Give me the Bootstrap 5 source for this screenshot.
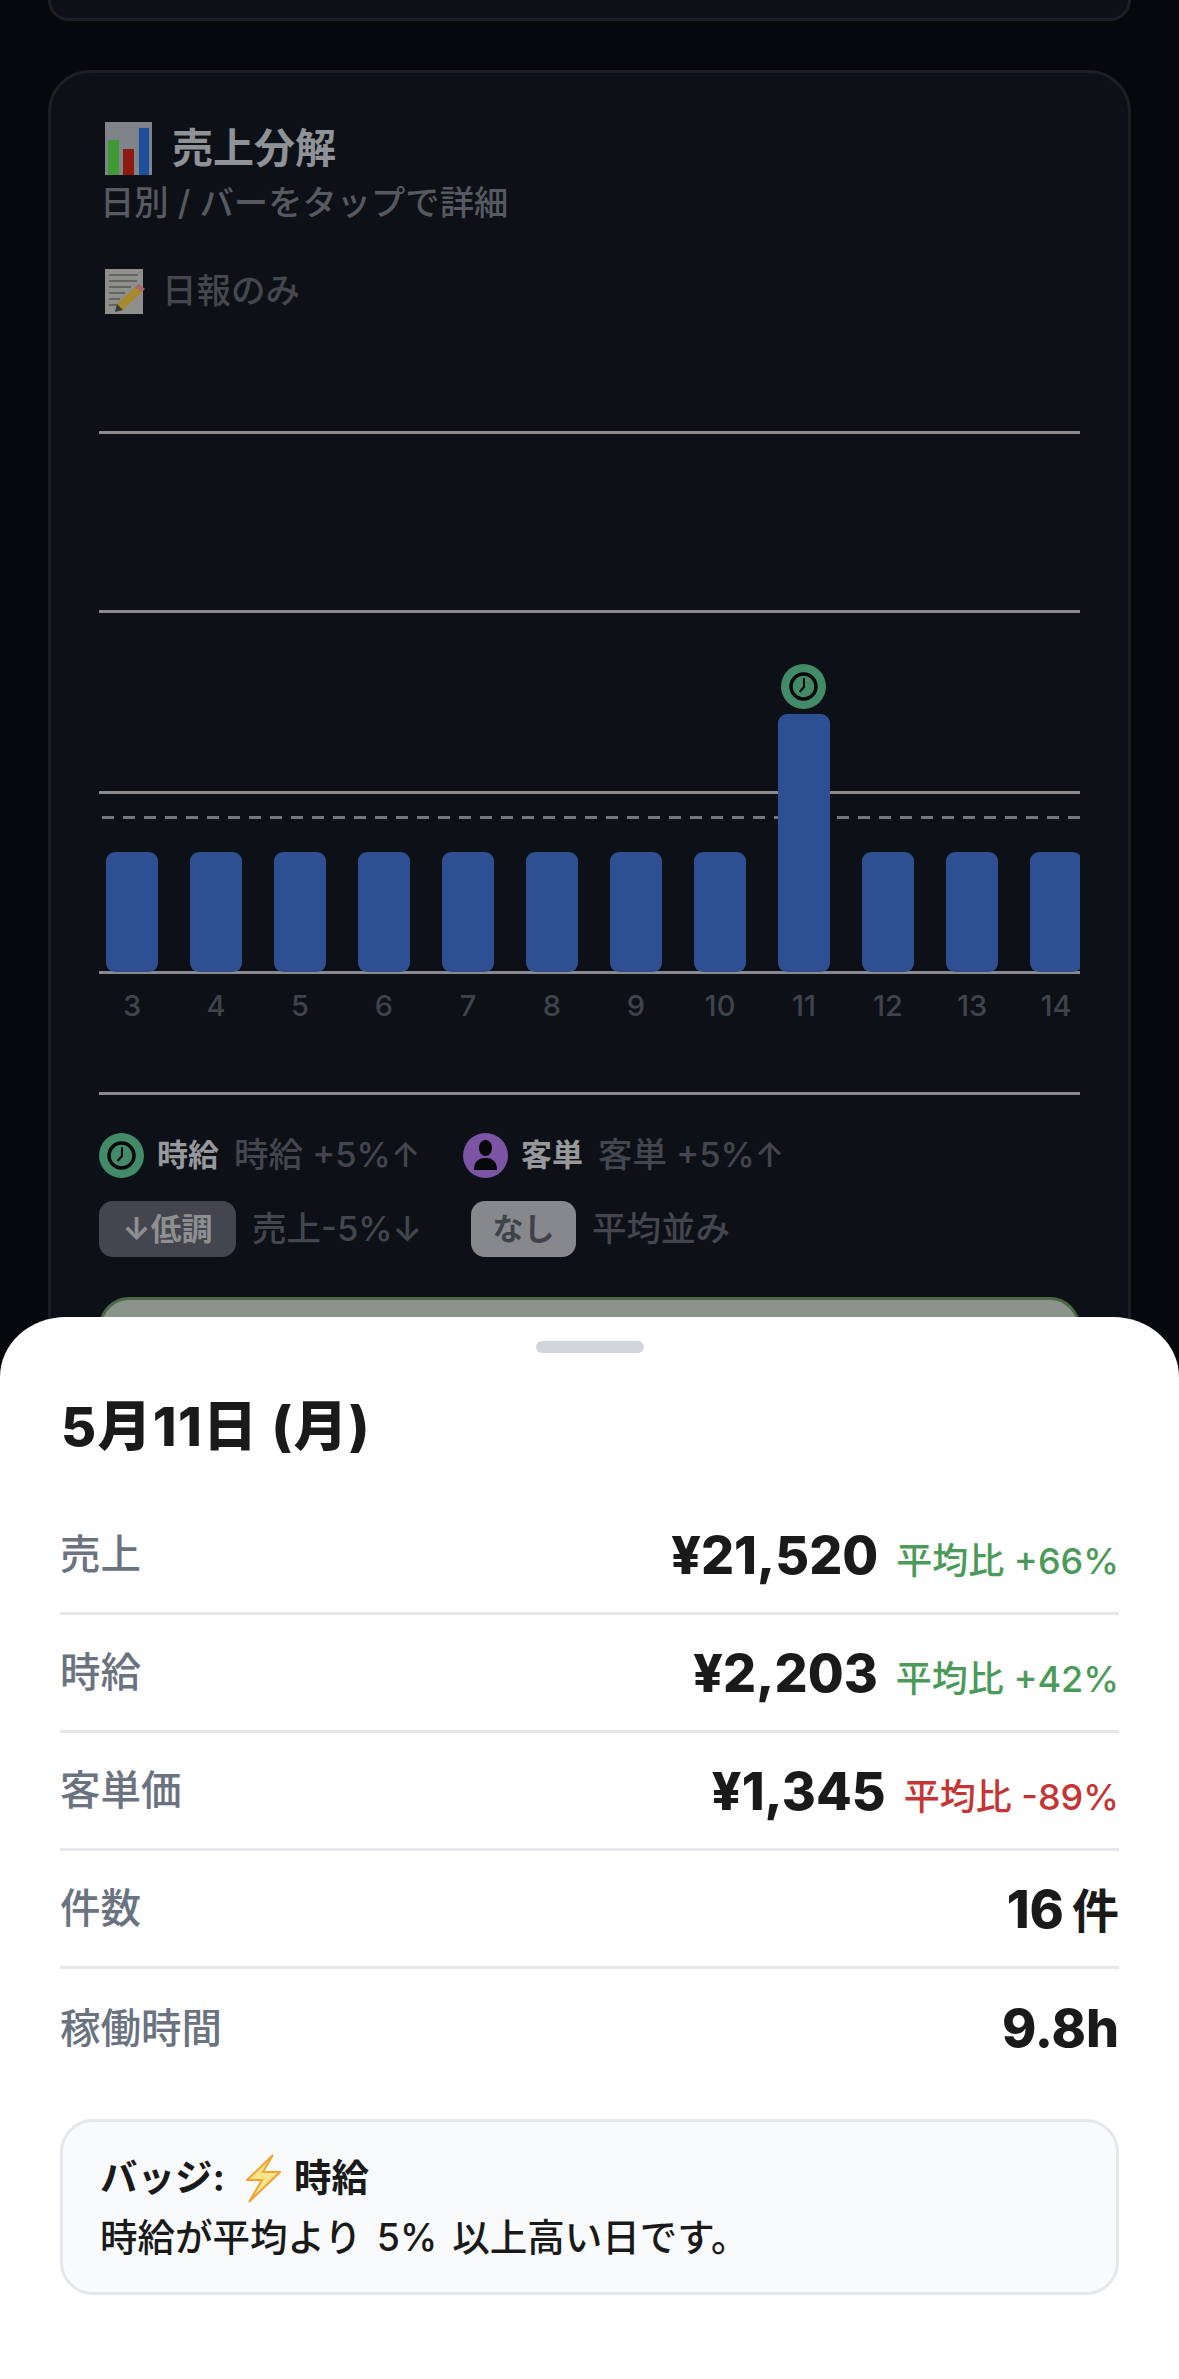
<!DOCTYPE html>
<html lang="ja">
<head>
    <meta charset="UTF-8" />
    <meta name="viewport" content="width=device-width, initial-scale=1.0" />
    <title>売上分解</title>
    <link href="https://cdn.jsdelivr.net/npm/bootstrap@5.3.0/dist/css/bootstrap.min.css" rel="stylesheet">
    <style>
        html, body { margin: 0; height: 2379px; overflow: hidden; }
        body { background: #06080c; font-family: Inter, "Noto Sans CJK JP", sans-serif; }
        .backdrop-page { height: 2379px; padding: 0 48px; overflow: hidden; }
        .stub-card { height: 21px; margin-bottom: 49px; background: #0d1117; border: 3px solid #1c1f24; border-top: 0; border-radius: 0 0 36px 36px; }
        .sales-card { height: 1290px; background: #0d1117; border: 3px solid #1c1f24; border-radius: 42px; padding: 0 48px; }
        .title-row { height: 52px; margin-top: 49px; gap: 20px; padding-left: 6px; color: #8f9296; font-size: 41px; font-weight: 700; line-height: 52px; }
        .sub-line { margin: 6px 0 0 1px; color: #565a60; font-size: 34.300px; font-weight: 500; line-height: 46px; }
        .mode-row { height: 46px; margin-top: 42px; gap: 17px; padding-left: 6px; color: #44474d; font-size: 34.500px; font-weight: 500; line-height: 46px; }
        .plot { height: 543px; margin-top: 117px; overflow: hidden; }
        .grid-line { left: 0; right: 0; height: 3px; background: #8a8a8e; }
        .avg-line { left: 0; right: 0; height: 3px; background: repeating-linear-gradient(to left, #74777b 0 12px, transparent 12px 21px); }
        .bars { height: 100%; gap: 32px; padding-left: 7px; }
        .bar-item { flex: 0 0 52px; background: #2e4f92; border-radius: 9px; margin-bottom: 2px; z-index: 1; }
        .bar-badge { top: -50px; left: 3px; z-index: 2; }
        .day-labels { gap: 32px; padding-left: 7px; overflow: hidden; margin-top: 13px; height: 38px; }
        .day-labels span { flex: 0 0 52px; text-align: center; color: #3f434b; font-size: 29px; font-weight: 500; line-height: 38px; white-space: nowrap; }
        .base-line { height: 3px; background: #8a8a8e; margin-top: 67px; }
        .legend-row { margin-top: 37px; height: 46px; align-items: center; }
        .legend-row + .legend-row { margin-top: 23px; height: 56px; }
        .legend-key { color: #97989b; font-size: 31px; font-weight: 700; margin-left: 13px; margin-right: 15px; white-space: nowrap; }
        .legend-text { color: #43464e; font-size: 34.500px; font-weight: 500; white-space: nowrap; }
        .legend-pill { height: 56px; border-radius: 14px; font-size: 31px; font-weight: 700; display: flex; align-items: center; justify-content: center; margin-right: 16px; white-space: nowrap; }
        .pill-low { width: 137px; background: #43464f; color: #8f8f91; }
        .pill-none { width: 105px; background: #87888c; color: #3f424a; }
        .tip-box { height: 60px; margin-top: 40px; background: #8c928c; border: 3px solid #4a6a45; border-radius: 30px; }
        .bottom-sheet { left: 0; right: 0; top: 1317px; height: 1062px; background: #fff; border-radius: 66px 66px 0 0 / 60px 60px 0 0; padding: 24px 60px 0 60px; z-index: 5; }
        .sheet-handle { width: 108px; height: 12px; background: #d1d5db; border-radius: 6px; margin: 0 auto; }
        .sheet-title { margin: 46px 0 0 1px; color: #1a1a1a; font-size: 54px; font-weight: 800; line-height: 56px; letter-spacing: 1.300px; }
        .detail-rows { margin-top: 42px; }
        .detail-row { height: 118px; border-bottom: 3px solid #e5e7eb; padding-top: 2px; }
        .detail-row:last-child { border-bottom: 0; }
        .detail-label { color: #6b7280; font-size: 40.500px; font-weight: 500; }
        .detail-value { color: #1a1a1a; font-size: 52px; font-weight: 800; }
        .value-unit { font-size: 47px; font-weight: 700; margin-left: 8px; }
        .detail-delta { margin-left: 18px; font-size: 36px; font-weight: 500; }
        .delta-up { color: #4c9a5a; }
        .delta-down { color: #c53535; }
        .badge-note { height: 176px; margin-top: 32px; background: #f9fafb; border: 3px solid #e5e7eb; border-radius: 33px; padding: 26px 37px 0; color: #1a1a1a; font-size: 37.500px; font-weight: 500; line-height: 60px; word-spacing: 5px; }
        .note-head { font-weight: 700; }
        .note-head svg { margin: 0 13px 0 21px; }
    </style>
</head>
<body class="position-relative">
    <div class="backdrop-page">
        <div class="stub-card"></div>

        <div class="sales-card">
            <div class="title-row d-flex align-items-center">
                <svg width="47" height="53" viewBox="0 0 47 53"><rect width="47" height="53" fill="#7f848a"/><rect x="3" y="18" width="11" height="35" fill="#3f9a33"/><rect x="18" y="27" width="11" height="26" fill="#8c1a10"/><rect x="34" y="6" width="10" height="47" fill="#1d4f9e"/></svg>
                <span>売上分解</span>
            </div>
            <p class="sub-line">日別 / バーをタップで詳細</p>
            <div class="mode-row d-flex align-items-center">
                <svg width="40" height="45" viewBox="0 0 40 45"><rect width="38" height="45" fill="#8f908d"/><g stroke="#3a3a38" stroke-width="1"><line x1="4" y1="6" x2="33" y2="6"/><line x1="4" y1="12" x2="32" y2="12"/><line x1="4" y1="18" x2="26" y2="18"/><line x1="4" y1="24" x2="20" y2="24"/><line x1="4" y1="30" x2="15" y2="30"/><line x1="4" y1="36" x2="12" y2="36"/></g><polygon points="30,18 37,23 18,41 10,43 12,35" fill="#a88a2e"/><polygon points="30,18 34,15 40,20 37,23" fill="#a8686a"/><polygon points="12,35 18,41 10,43" fill="#3a3a38"/></svg>
                <span>日報のみ</span>
            </div>

            <div class="plot position-relative">
                <div class="grid-line position-absolute" style="top:0"></div>
                <div class="grid-line position-absolute" style="top:179px"></div>
                <div class="grid-line position-absolute" style="top:360px"></div>
                <div class="grid-line position-absolute" style="top:540px"></div>
                <div class="avg-line position-absolute" style="top:385px"></div>
                <div class="bars d-flex align-items-end">
                    <div class="bar-item" style="height:120px"></div>
                    <div class="bar-item" style="height:120px"></div>
                    <div class="bar-item" style="height:120px"></div>
                    <div class="bar-item" style="height:120px"></div>
                    <div class="bar-item" style="height:120px"></div>
                    <div class="bar-item" style="height:120px"></div>
                    <div class="bar-item" style="height:120px"></div>
                    <div class="bar-item" style="height:120px"></div>
                    <div class="bar-item position-relative" style="height:258px">
                        <svg class="bar-badge position-absolute" width="45" height="45" viewBox="0 0 45 45"><circle cx="22.500" cy="22.500" r="22.500" fill="#438a68"/><circle cx="22.500" cy="22.500" r="12.500" fill="none" stroke="#050708" stroke-width="3.500"/><path d="M23 14v9l-4.500 5" fill="none" stroke="#050708" stroke-width="2"/></svg>
                    </div>
                    <div class="bar-item" style="height:120px"></div>
                    <div class="bar-item" style="height:120px"></div>
                    <div class="bar-item" style="height:120px"></div>
                </div>
            </div>
            <div class="day-labels d-flex">
                <span>3</span><span>4</span><span>5</span><span>6</span><span>7</span><span>8</span><span>9</span><span>10</span><span>11</span><span>12</span><span>13</span><span>14</span>
            </div>
            <div class="base-line"></div>

            <div class="legend-row d-flex">
                <svg width="45" height="45" viewBox="0 0 45 45"><circle cx="22.500" cy="22.500" r="22.500" fill="#438a68"/><circle cx="22.500" cy="22.500" r="12.500" fill="none" stroke="#050708" stroke-width="3.500"/><path d="M23 14v9l-4.500 5" fill="none" stroke="#050708" stroke-width="2"/></svg>
                <span class="legend-key">時給</span>
                <span class="legend-text" style="width:229px">時給 +5%↑</span>
                <svg width="45" height="45" viewBox="0 0 45 45"><circle cx="22.500" cy="22.500" r="22.500" fill="#7b55a3"/><ellipse cx="22.500" cy="15" rx="6.500" ry="8" fill="#050708"/><path d="M11 37c0-9 5-12 11.500-12S34 28 34 37z" fill="#050708"/></svg>
                <span class="legend-key">客単</span>
                <span class="legend-text">客単 +5%↑</span>
            </div>
            <div class="legend-row d-flex">
                <span class="legend-pill pill-low">↓低調</span>
                <span class="legend-text" style="width:219px">売上-5%↓</span>
                <span class="legend-pill pill-none">なし</span>
                <span class="legend-text">平均並み</span>
            </div>
            <div class="tip-box"></div>
        </div>
    </div>

    <div class="bottom-sheet position-absolute">
        <div class="sheet-handle"></div>
        <h2 class="sheet-title">5月11日 (月)</h2>
        <div class="detail-rows">
            <div class="detail-row d-flex justify-content-between align-items-center">
                <span class="detail-label">売上</span>
                <span><span class="detail-value">¥21,520</span><span class="detail-delta delta-up">平均比 +66%</span></span>
            </div>
            <div class="detail-row d-flex justify-content-between align-items-center">
                <span class="detail-label">時給</span>
                <span><span class="detail-value">¥2,203</span><span class="detail-delta delta-up">平均比 +42%</span></span>
            </div>
            <div class="detail-row d-flex justify-content-between align-items-center">
                <span class="detail-label">客単価</span>
                <span><span class="detail-value">¥1,345</span><span class="detail-delta delta-down">平均比 -89%</span></span>
            </div>
            <div class="detail-row d-flex justify-content-between align-items-center">
                <span class="detail-label">件数</span>
                <span class="detail-value">16<span class="value-unit">件</span></span>
            </div>
            <div class="detail-row d-flex justify-content-between align-items-center">
                <span class="detail-label">稼働時間</span>
                <span class="detail-value">9.8h</span>
            </div>
        </div>
        <div class="badge-note">
            <div class="note-head d-flex align-items-center">
                <span>バッジ:</span>
                <svg width="35" height="49" viewBox="0 0 35 49"><polygon points="27,1 1,26 16,26 3,48 34,18 17,18" fill="#fde38a" stroke="#f0a435" stroke-width="2"/></svg>
                <span>時給</span>
            </div>
            <div>時給が平均より 5% 以上高い日です。</div>
        </div>
    </div>

    <script src="https://cdn.jsdelivr.net/npm/bootstrap@5.3.0/dist/js/bootstrap.bundle.min.js"></script>
</body>
</html>
